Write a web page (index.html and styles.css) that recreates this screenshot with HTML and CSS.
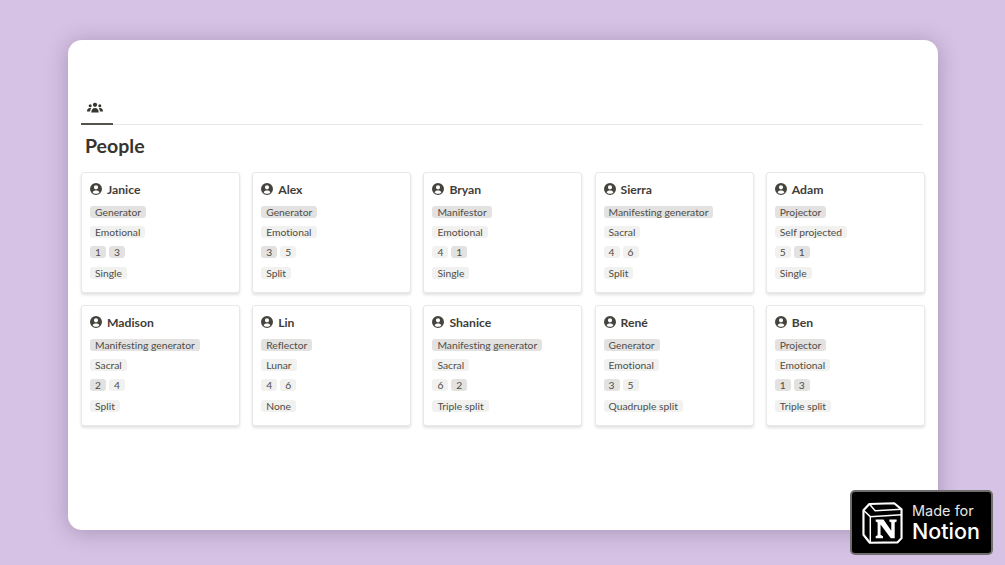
FILE: index.html
```html
<!DOCTYPE html>
<html lang="en">
<head>
<meta charset="utf-8">
<title>People</title>
<link rel="stylesheet" href="styles.css">
</head>
<body>
<main class="window">
  <nav class="tabs">
    <div class="tab">
      <svg class="tab-icon" viewBox="0 0 18 12" aria-hidden="true">
        <circle cx="9" cy="3" r="2.4"/><path d="M4.8 11.500c0-3 1.600-5 4.200-5s4.200 2 4.200 5z"/>
        <circle cx="3.600" cy="4" r="1.700"/><path d="M0 10.500c0-2.500 1.200-4 3.400-4 .6 0 1 .1 1.300.3-.8 1-1.200 2.200-1.300 3.700z"/>
        <circle cx="14.400" cy="4" r="1.700"/><path d="M18 10.500c0-2.500-1.200-4-3.400-4-.6 0-1 .1-1.300.3.8 1 1.200 2.200 1.300 3.700z"/>
      </svg>
    </div>
  </nav>
  <h1 class="title">People</h1>
  <section class="grid">
    <article class="card"><h2 class="name"><svg class="avatar" viewBox="0 0 12 12"><use href="#person"/></svg>Janice</h2><div class="row"><span class="tag dark">Generator</span></div><div class="row"><span class="tag">Emotional</span></div><div class="row"><span class="tag dark num">1</span><span class="tag dark num">3</span></div><div class="row"><span class="tag">Single</span></div></article>
    <article class="card"><h2 class="name"><svg class="avatar" viewBox="0 0 12 12"><use href="#person"/></svg>Alex</h2><div class="row"><span class="tag dark">Generator</span></div><div class="row"><span class="tag">Emotional</span></div><div class="row"><span class="tag dark num">3</span><span class="tag num">5</span></div><div class="row"><span class="tag">Split</span></div></article>
    <article class="card"><h2 class="name"><svg class="avatar" viewBox="0 0 12 12"><use href="#person"/></svg>Bryan</h2><div class="row"><span class="tag dark">Manifestor</span></div><div class="row"><span class="tag">Emotional</span></div><div class="row"><span class="tag num">4</span><span class="tag dark num">1</span></div><div class="row"><span class="tag">Single</span></div></article>
    <article class="card"><h2 class="name"><svg class="avatar" viewBox="0 0 12 12"><use href="#person"/></svg>Sierra</h2><div class="row"><span class="tag dark">Manifesting generator</span></div><div class="row"><span class="tag">Sacral</span></div><div class="row"><span class="tag num">4</span><span class="tag num">6</span></div><div class="row"><span class="tag">Split</span></div></article>
    <article class="card"><h2 class="name"><svg class="avatar" viewBox="0 0 12 12"><use href="#person"/></svg>Adam</h2><div class="row"><span class="tag dark">Projector</span></div><div class="row"><span class="tag">Self projected</span></div><div class="row"><span class="tag num">5</span><span class="tag dark num">1</span></div><div class="row"><span class="tag">Single</span></div></article>
    <article class="card"><h2 class="name"><svg class="avatar" viewBox="0 0 12 12"><use href="#person"/></svg>Madison</h2><div class="row"><span class="tag dark">Manifesting generator</span></div><div class="row"><span class="tag">Sacral</span></div><div class="row"><span class="tag dark num">2</span><span class="tag num">4</span></div><div class="row"><span class="tag">Split</span></div></article>
    <article class="card"><h2 class="name"><svg class="avatar" viewBox="0 0 12 12"><use href="#person"/></svg>Lin</h2><div class="row"><span class="tag dark">Reflector</span></div><div class="row"><span class="tag">Lunar</span></div><div class="row"><span class="tag num">4</span><span class="tag num">6</span></div><div class="row"><span class="tag">None</span></div></article>
    <article class="card"><h2 class="name"><svg class="avatar" viewBox="0 0 12 12"><use href="#person"/></svg>Shanice</h2><div class="row"><span class="tag dark">Manifesting generator</span></div><div class="row"><span class="tag">Sacral</span></div><div class="row"><span class="tag num">6</span><span class="tag dark num">2</span></div><div class="row"><span class="tag">Triple split</span></div></article>
    <article class="card"><h2 class="name"><svg class="avatar" viewBox="0 0 12 12"><use href="#person"/></svg>René</h2><div class="row"><span class="tag dark">Generator</span></div><div class="row"><span class="tag">Emotional</span></div><div class="row"><span class="tag dark num">3</span><span class="tag num">5</span></div><div class="row"><span class="tag">Quadruple split</span></div></article>
    <article class="card"><h2 class="name"><svg class="avatar" viewBox="0 0 12 12"><use href="#person"/></svg>Ben</h2><div class="row"><span class="tag dark">Projector</span></div><div class="row"><span class="tag">Emotional</span></div><div class="row"><span class="tag dark num">1</span><span class="tag dark num">3</span></div><div class="row"><span class="tag">Triple split</span></div></article>
  </section>
</main>
<aside class="badge">
  <svg class="badge-logo" viewBox="0 0 42 42" aria-hidden="true">
    <path class="logo-cube" d="M1.500 8 7.500 1.500 33 .8 40.500 7V36.500L36.500 40.800 8 41.200 1.500 33Z"/>
    <path class="logo-line" d="M1.500 8 8.500 14.500 40.500 12.500M8.500 14.500V41M7.500 1.500 13.500 8.500 40.500 7"/>
    <path class="logo-n" d="M14 17.500H22L30 29V20.500L28 19.500V17.500H35.500V19.500L33.500 20.500V36.500H29.500L19 22.500V33L21.500 34.500V36.500H14V34.500L16 33.500V20.500L14 19.500Z"/>
  </svg>
  <div class="badge-text"><span class="badge-small">Made for</span><span class="badge-big">Notion</span></div>
</aside>
<svg class="defs" aria-hidden="true"><defs><symbol id="person" viewBox="0 0 12 12"><path fill-rule="evenodd" d="M6 0a6 6 0 1 1 0 12A6 6 0 0 1 6 0Zm0 2.200a2.100 2.100 0 1 0 0 4.200 2.100 2.100 0 0 0 0-4.200ZM2.600 9.300c.8 1 2 1.500 3.400 1.500s2.600-.5 3.400-1.500C8.900 8.100 7.600 7.500 6 7.500s-2.900.6-3.400 1.800Z"/></symbol></defs></svg>
</body>
</html>
```
FILE: styles.css
```css
* { box-sizing: border-box; }
html, body { height: 100%; }
body {
  margin: 0;
  width: 1005px;
  height: 565px;
  overflow: hidden;
  position: relative;
  background: #d6c2e4;
  padding: 40px 67px 35px 68px;
  font-family: Lato, "Open Sans", sans-serif;
  font-variant-ligatures: none;
  color: #37352f;
}
.window {
  height: 490px;
  background: #fff;
  border-radius: 14px;
  box-shadow: 0 2px 22px rgba(50, 30, 70, .28);
  padding: 50px 13px 0;
}
.tabs {
  height: 35px;
  width: 842px;
  border-bottom: 1px solid #e9e9e7;
  display: flex;
}
.tab {
  width: 32px;
  height: 35px;
  border-bottom: 2px solid #55534e;
  padding: 12px 0 0 6px;
}
.tab-icon { display: block; width: 16px; height: 11px; fill: #37352f; }
.title {
  margin: 7px 0 12px 4px;
  font-size: 19.500px;
  line-height: 28px;
  font-weight: 700;
  color: #37352f;
}
.grid {
  display: grid;
  grid-template-columns: repeat(5, 159px);
  grid-auto-rows: 121px;
  column-gap: 12.200px;
  row-gap: 12px;
}
.card {
  background: #fff;
  border: 1px solid #e8e8e7;
  border-radius: 3px;
  box-shadow: 0 2px 3px rgba(15, 15, 15, .12);
  padding: 6px 8px 0;
}
.name {
  margin: 0 0 3px;
  height: 20px;
  display: flex;
  align-items: center;
  gap: 5px;
  font-size: 12.200px;
  font-weight: 700;
  color: #3f3d38;
}
.avatar { width: 12px; height: 12px; fill: #45433e; flex: none; }
.row {
  display: flex;
  gap: 3px;
  height: 20.200px;
  align-items: center;
}
.tag {
  height: 12px;
  line-height: 12px;
  padding: 0 5px;
  border-radius: 3px;
  background: #f1f1ef;
  font-size: 10.300px;
  color: #4f4d48;
  white-space: nowrap;
}
.tag.dark { background: #e3e2e0; }
.tag.num { min-width: 15.500px; text-align: center; }
.badge {
  position: absolute;
  left: 850px;
  top: 490px;
  width: 143px;
  height: 65px;
  background: #000;
  border: 2px solid #6f6f6f;
  border-radius: 5px;
  display: flex;
  align-items: center;
  padding-left: 10px;
  gap: 9px;
  font-family: Inter, "Liberation Sans", sans-serif;
  color: #fff;
}
.badge-logo { width: 41px; height: 42px; flex: none; }
.logo-cube { fill: #000; stroke: #fff; stroke-width: 2.200; stroke-linejoin: round; }
.logo-line { fill: none; stroke: #fff; stroke-width: 1.500; }
.logo-n { fill: #fff; }
.badge-text { display: flex; flex-direction: column; line-height: 1; }
.badge-small { font-size: 14.500px; line-height: 17px; font-weight: 400; color: #e6e6e6; }
.badge-big { font-size: 21.500px; line-height: 25px; font-weight: 500; }
.defs { position: absolute; width: 0; height: 0; }
```
